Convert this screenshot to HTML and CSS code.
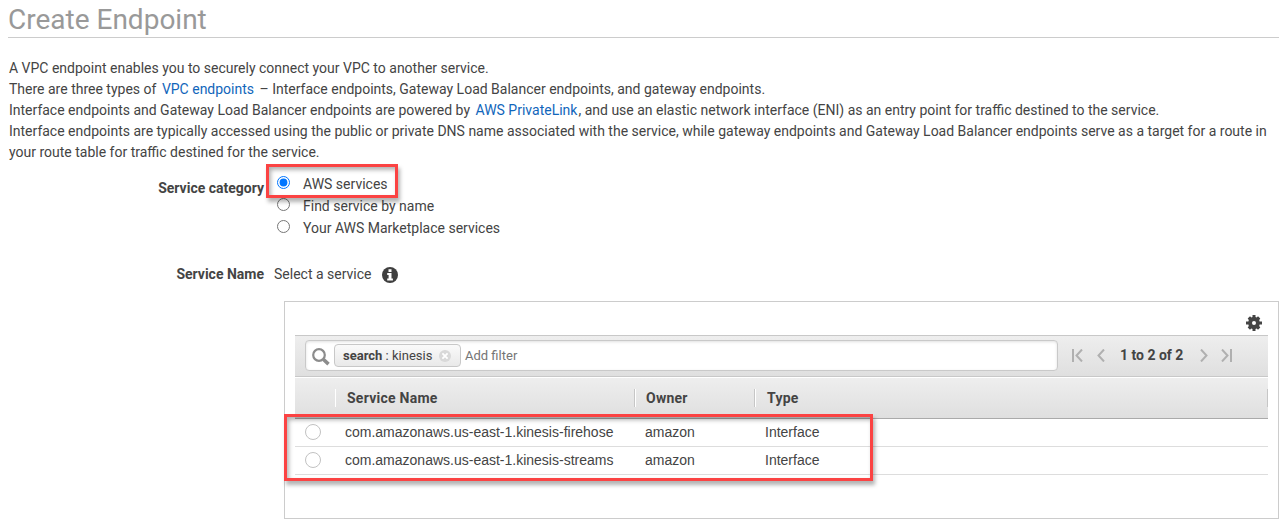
FILE: index.html
```html
<!DOCTYPE html>
<html lang="en">
<head>
<meta charset="utf-8">
<title>Create Endpoint</title>
<link rel="stylesheet" href="styles.css">
</head>
<body>
<h1 class="title">Create Endpoint</h1>
<section class="intro">
  <p>A VPC endpoint enables you to securely connect your VPC to another service.</p>
  <p>There are three types of <a class="link">VPC endpoints</a><span class="after">&nbsp;</span> – Interface endpoints, Gateway Load Balancer endpoints, and gateway endpoints.</p>
  <p>Interface endpoints and Gateway Load Balancer endpoints are powered by <a class="link">AWS PrivateLink</a><span class="comma">,</span> and use an elastic network interface (ENI) as an entry point for traffic destined to the service.</p>
  <p>Interface endpoints are typically accessed using the public or private DNS name associated with the service, while gateway endpoints and Gateway Load Balancer endpoints serve as a target for a route in<br>your route table for traffic destined for the service.</p>
</section>
<section class="category">
  <div class="label">Service category</div>
  <div class="options">
    <label class="option"><input type="radio" name="cat" checked><span>AWS services</span></label>
    <label class="option"><input type="radio" name="cat"><span>Find service by name</span></label>
    <label class="option"><input type="radio" name="cat"><span>Your AWS Marketplace services</span></label>
    <div class="mark mark-category"></div>
  </div>
</section>
<section class="service">
  <div class="label">Service Name</div>
  <span class="hint">Select a service</span>
  <svg class="info" viewBox="0 0 16 16" width="16" height="16"><circle cx="8" cy="8" r="8" fill="#3f3f3f"/><path d="M6.5 2.3h3v2.7h-3zM5.2 6h4.3v5.5h1.4v1.9H5.2v-1.9h1.4V7.9H5.2z" fill="#fff"/></svg>
</section>
<section class="panel">
  <div class="settings">
    <svg viewBox="0 0 16 16" width="16" height="16"><path fill="#444" fill-rule="evenodd" d="M6.5 0h3v2l1.2.5L12 1.2 14.3 3.500 13.200 5l.4 1.500H16v3h-2.400l-.4 1.500 1.100 1.500L12 14.800l-1.300-1.300-1.200.5v2h-3v-2l-1.200-.5L4 14.800 1.700 12.500 2.800 11l-.4-1.500H0v-3h2.400L2.800 5 1.700 3.500 4 1.200l1.300 1.300 1.200-.5zM8 6a2 2 0 1 0 0 4 2 2 0 0 0 0-4z"/></svg>
  </div>
  <div class="toolbar">
    <div class="search">
      <svg class="lens" viewBox="0 0 18 18" width="18" height="18" fill="none" stroke="#8c8c8c"><circle cx="7" cy="7" r="5.8" stroke-width="2.2"/><path d="M11.5 11.5l5 4.6" stroke-width="3.6"/></svg>
      <div class="tag"><b>search</b><span>&nbsp;: kinesis</span>
        <svg viewBox="0 0 12 12" width="12" height="12"><circle cx="6" cy="6" r="6" fill="#d9d9d9"/><path d="M3.4 3.4l5.2 5.2M8.6 3.4L3.4 8.6" stroke="#fff" stroke-width="1.8"/></svg>
      </div>
      <span class="placeholder">Add filter</span>
    </div>
    <div class="pager">
      <svg viewBox="0 0 11 13" width="11" height="13"><path d="M1 0v13M10 .5L4.5 6.5l5.5 6"/></svg>
      <svg class="prev" viewBox="0 0 8 13" width="8" height="13"><path d="M7 .5L1.5 6.5l5.500 6"/></svg>
      <b class="count">1 to 2 of 2</b>
      <svg class="next" viewBox="0 0 8 13" width="8" height="13"><path d="M1 .5l5.5 6L1 12.500"/></svg>
      <svg viewBox="0 0 11 13" width="11" height="13"><path d="M10 0v13M1 .5l5.5 6L1 12.5"/></svg>
    </div>
  </div>
  <div class="table">
    <div class="row head"><div></div><div>Service Name</div><div>Owner</div><div>Type</div></div>
    <div class="row"><div><i class="pick"></i></div><div>com.amazonaws.us-east-1.kinesis-firehose</div><div>amazon</div><div>Interface</div></div>
    <div class="row"><div><i class="pick"></i></div><div>com.amazonaws.us-east-1.kinesis-streams</div><div>amazon</div><div>Interface</div></div>
    <div class="mark mark-rows"></div>
  </div>
</section>
</body>
</html>
```
FILE: styles.css
```css
* { box-sizing: border-box; }
body { margin: 0; padding: 0 2px 0 8px; height: 521px; overflow: hidden; background: #fff; color: #444; font: 14px/21px Roboto, sans-serif; }
.title { margin: 0 0 20px; height: 38px; border-bottom: 1px solid #ccc; color: #999; font-size: 28px; line-height: 40px; font-weight: 400; }
.intro { padding-left: 1px; white-space: nowrap; }
.intro p { margin: 0; }
.link { color: #1166bb; margin-left: 2px; }
.after { margin-right: -1.500px; }
.comma { margin-left: 1px; }
.category { display: flex; margin-top: 10px; }
.label { width: 256px; text-align: right; font-weight: 700; }
.category .label { padding-top: 5px; }
.options { position: relative; padding-left: 13px; }
.option { display: flex; height: 22px; line-height: 22px; }
.option input { width: 13px; height: 13px; margin: 3px 13px 0 0; }
.mark { position: absolute; border: 3px solid #fb4343; box-shadow: 2px 4px 4px rgba(0,0,0,.3), inset 2px 3px 4px rgba(0,0,0,.3); }
.mark-category { left: 2px; top: -9px; width: 132px; height: 34px; }
.service { display: flex; height: 21px; margin-top: 25px; }
.hint { margin-left: 10px; }
.info { margin: 3px 0 0 10px; }
.panel { margin: 16px 0 0 276px; width: 995px; height: 218px; padding: 0 10px; border: 1px solid #ccc; }
.settings { height: 33px; display: flex; justify-content: flex-end; padding: 13px 6px 0 0; }
.toolbar { height: 42px; display: flex; align-items: flex-start; padding: 4px 35px 0 10px; border: solid #c8c8c8; border-width: 1px 0; background: linear-gradient(#eee, #dfdfdf); }
.search { width: 753px; height: 31px; display: flex; align-items: center; padding-left: 6px; background: #fff; border: 1px solid #c9c9c9; border-radius: 4px; box-shadow: inset 0 1px 3px rgba(0,0,0,.12); font-size: 13px; }
.lens { margin-right: 4px; margin-top: 3px; }
.tag { display: flex; align-items: center; width: 127px; height: 23px; padding-left: 8px; border: 1px solid #c8c8c8; border-radius: 4px; background: linear-gradient(#fafafa, #e9e9e9); }
.tag svg { margin-left: 7px; }
.placeholder { margin-left: 4px; color: #757575; }
.pager { flex: 1; height: 31px; display: flex; align-items: center; padding-left: 14px; }
.pager svg { fill: none; stroke: #b0b0b0; stroke-width: 2; flex: none; }
.prev { margin-left: 14px; }
.count { margin: 0 17px 0 15px; white-space: nowrap; }
.next { margin-right: 13px; }
.table { position: relative; margin-top: 1px; font-family: "Liberation Sans", sans-serif; }
.row { display: grid; grid-template-columns: 40px 300px 120px 1fr; height: 28px; border-bottom: 1px solid #ddd; line-height: 27px; }
.row > div { padding-left: 10px; white-space: nowrap; }
.row.head { height: 41px; align-items: center; border-bottom-color: #aaa; background: linear-gradient(#eee, #dfdfdf); font-family: Roboto, sans-serif; font-weight: 700; letter-spacing: .25px; }
.row.head > div { height: 18px; line-height: 19px; border-right: 1px solid #c6c6c6; box-shadow: 1px 0 #fff; padding-left: 12px; }
.row.head > div:nth-child(3) { padding-left: 11px; }
.row.head > div:first-child { border-right-color: transparent; }
.row.head > div:last-child { box-shadow: none; }
.pick { display: block; width: 16px; height: 16px; margin-top: 5px; border: 1px solid #c2c2c2; border-radius: 50%; background: #fff; }
.mark-rows { left: -11px; top: 36px; width: 589px; height: 67px; }
```
